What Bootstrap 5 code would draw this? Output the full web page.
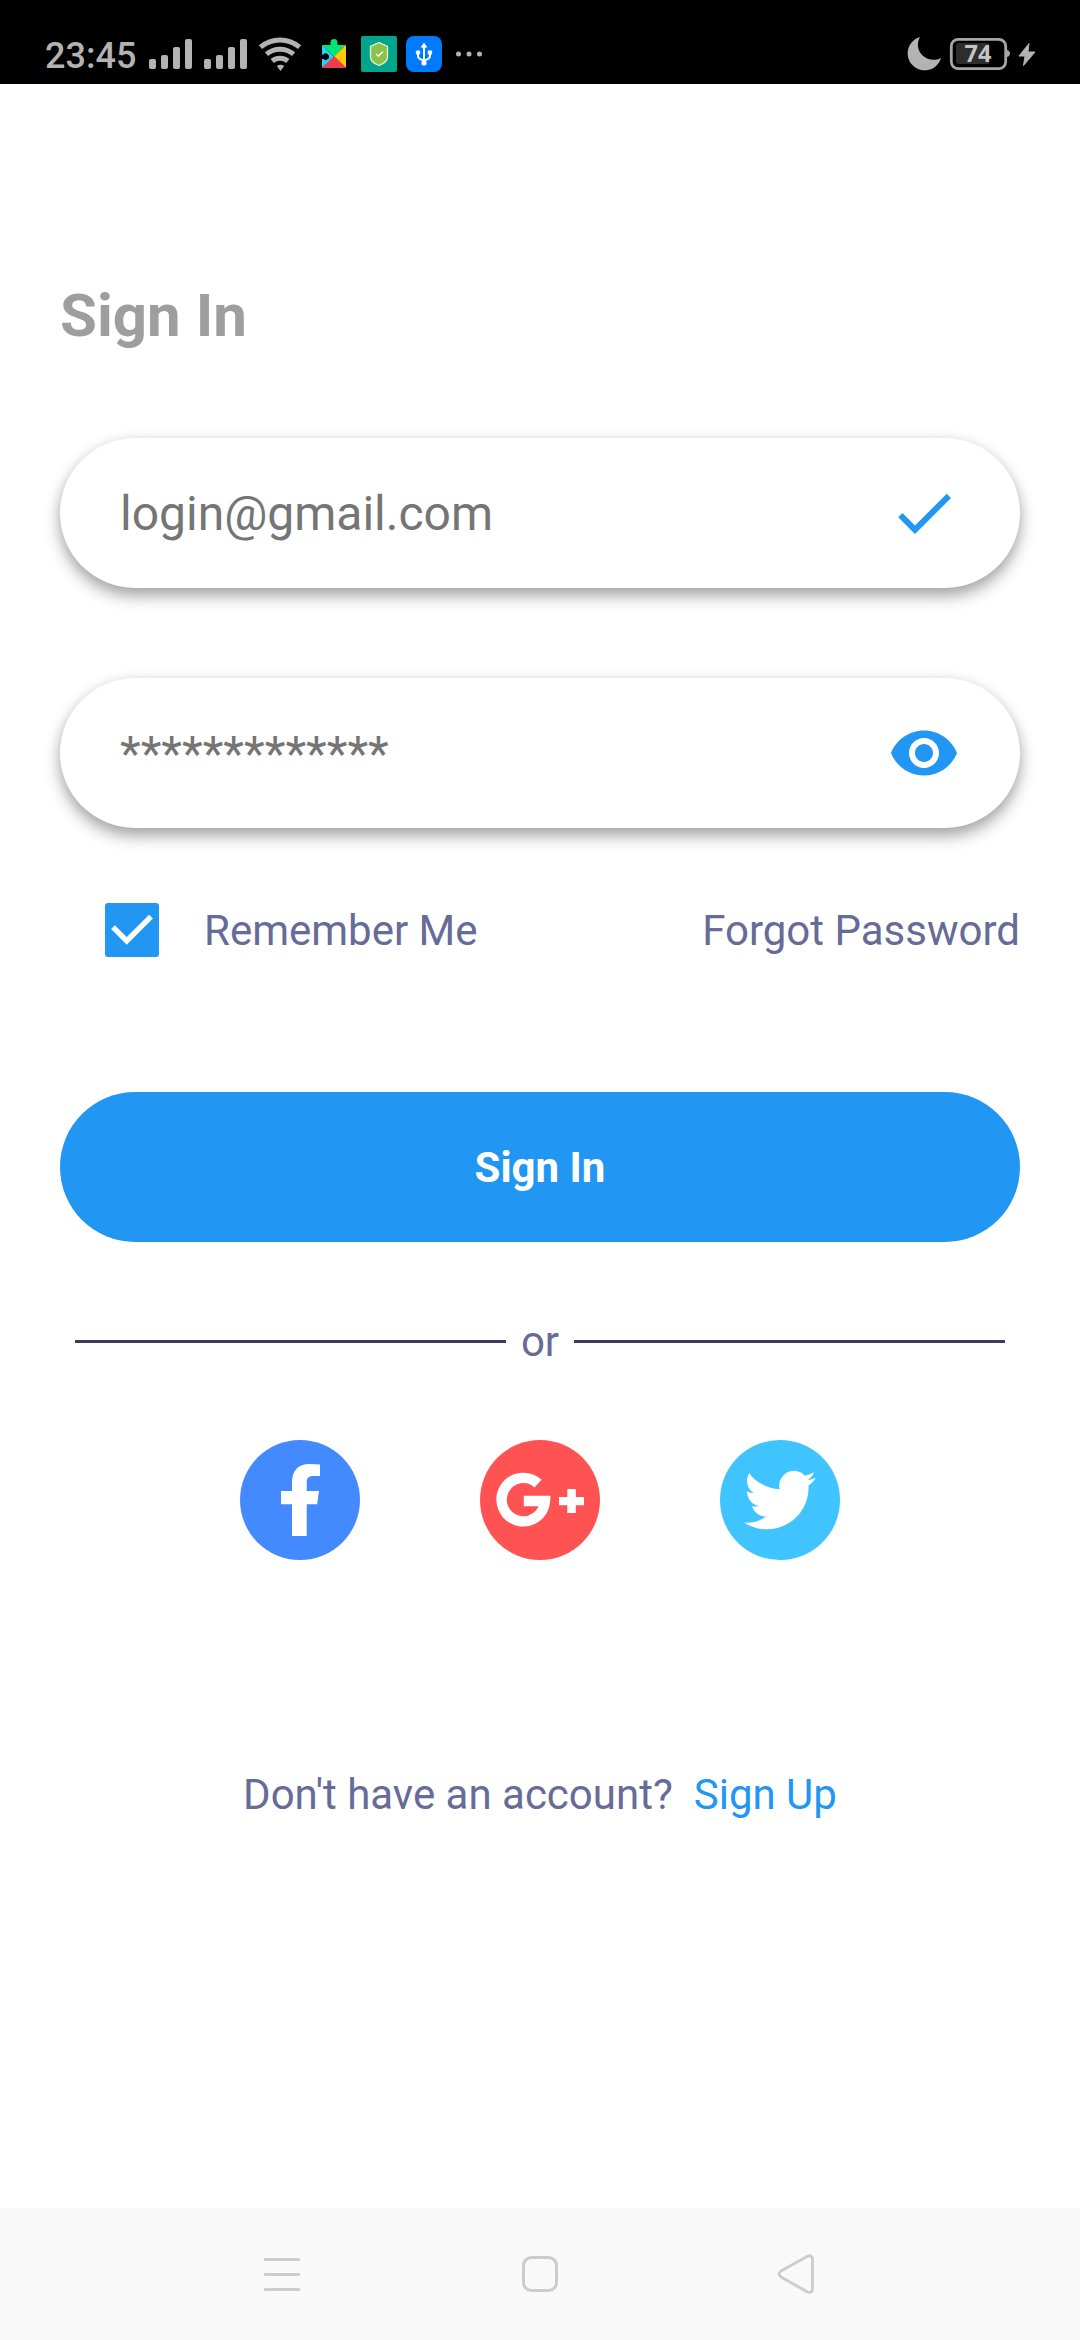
<!DOCTYPE html>
<html lang="en">
<head>
<meta charset="utf-8">
<meta name="viewport" content="width=device-width, initial-scale=1">
<title>Sign In</title>
<link rel="stylesheet" href="https://cdn.jsdelivr.net/npm/bootstrap@5.3.0/dist/css/bootstrap.min.css">
<style>
body{font-family:Roboto,sans-serif;background:#fff;color:#666b98;font-size:42px;line-height:50px}
svg{display:block;flex:none}
.screen{width:1080px;height:2340px;overflow:hidden}
.statusbar{height:84px;background:#000;color:#b3b3b3;padding:20px 42px 0 45px}
.clock{font-size:36px;line-height:72px;font-weight:500;height:64px;width:104px}
.content{padding:0 60px}
.heading{font-size:60px;line-height:70px;color:#9e9e9e;margin:197px 0 87px}
.field{height:150px;border-radius:75px;padding:0 60px;background:#fff;box-shadow:0 8px 16px rgba(0,0,0,.35),0 0 12px rgba(0,0,0,.05)}
.field + .field{margin-top:90px}
.field .form-control{font-size:48px;line-height:56px;height:58px;color:#757575;font-family:inherit;border-radius:0}
.field .form-control.pt-shift{padding-top:1px!important}
.field .form-control::placeholder{color:#757575;opacity:1}
.signin{height:150px;border-radius:75px;background:#2196f3;font-size:42px;margin-top:135px;--bs-btn-hover-bg:#2196f3}
.options{padding-left:45px;margin-top:75px;height:54px}
.options span,.options a{padding-top:2px}
.options span{margin-left:45px}
.options a,.signup a{text-decoration:none}
.options a{color:inherit}
.divider{padding:0 15px;margin-top:74px;height:50px;gap:15px}
.divider span{padding-top:2px}
.rule{height:3px;background:#3d3c60}
.social{gap:120px;margin-top:74px}
.signup{margin-top:210px;gap:21px}
.signup a{color:#2196f3}
.sysnav{height:132px;background:#f9f9f9;padding:0 263px 0 264px}
</style>
</head>
<body>
<div class="screen d-flex flex-column">
  <header class="statusbar d-flex justify-content-between">
    <div class="d-flex">
      <div class="clock">23:45</div>
      <svg width="346" height="64" viewBox="149 20 346 64" fill="#b3b3b3">
        <g id="signal"><rect x="149" y="59" width="7" height="10" rx="2"/><rect x="161" y="55" width="7" height="14" rx="2"/><rect x="173" y="47" width="7" height="22" rx="2"/><rect x="185" y="39" width="7" height="30" rx="2"/></g>
        <use href="#signal" x="55"/>
        <g fill="none" stroke="#b3b3b3" stroke-width="5"><path d="M260.4 47.2a30 30 0 0 1 39.2 0"/><path d="M266.4 54.200a21 21 0 0 1 27.2 0"/><path d="M272.2 61a12.5 12.5 0 0 1 15.6 0"/></g>
        <path d="M276.800 66q3.700-2.400 7.400 0l-3.700 5z"/>
        <path fill="#00e676" d="M322 45h8.500v-2.500a3.200 3.200 0 1 1 7 0V45H346L334 57z"/>
        <path fill="#20d5f7" d="M322 45v23l12-11z"/>
        <path fill="#ffca0a" d="M346 45v23L334 56.500z"/><path fill="#f43b4e" d="M322 68l12-12 12 12z"/>
        <path fill="#000" d="M321 54.500h2.500a3.200 3.200 0 1 1 0 4.500H321z"/>
        <rect x="361" y="36" width="36" height="36" rx="2" fill="#00a68b"/>
        <path fill="#8bc34a" stroke="#e8f5d0" stroke-width="1.300" d="M379 42.500l8.500 4v10.500q0 5.500-8.500 8.500-8.500-3-8.500-8.500V46.500z"/>
        <path fill="none" stroke="#fff" stroke-width="1.500" d="M376 54l2.500 2 4.500-4.500"/>
        <rect x="406" y="36" width="36" height="36" rx="8" fill="#007aff"/>
        <g fill="none" stroke="#fff" stroke-width="2"><path d="M424 46v18M418 53v3q0 3 6 4.500M430 53v3q0 3-6 4.500"/></g>
        <g fill="#fff"><path d="M420.500 47.500l3.500-5 3.500 5z"/><circle cx="424" cy="63" r="2.600"/><circle cx="418" cy="52.500" r="2.300"/><rect x="427.800" y="50.500" width="4.300" height="4"/></g>
        <circle cx="458.500" cy="54" r="2.500"/><circle cx="469" cy="54" r="2.500"/><circle cx="479.500" cy="54" r="2.500"/>
      </svg>
    </div>
    <svg width="132" height="64" viewBox="906 20 132 64" fill="#b3b3b3">
      <path d="M920 37a17 17 0 1 0 21 21c-13 7-29-7-21-21z"/>
      <rect x="951.300" y="39.300" width="54.400" height="29.400" rx="7" fill="none" stroke="#a6a6a6" stroke-width="2.800"/>
      <path fill="#a6a6a6" d="M1007 50q3 1 3 3.500t-3 3.500z"/>
      <path fill="#2d2d2d" d="M959 43h30v21h-30q-3 0-3-3V46q0-3 3-3z"/>
      <text x="978" y="62" text-anchor="middle" font-family="Noto Sans" font-weight="700" font-size="23.500" fill="#c4c4c4">74</text>
      <path stroke="#b3b3b3" stroke-width="1" stroke-linejoin="round" d="M1029 43.500l-10 12.500h6l-1.500 9.500L1035 52h-7z"/>
    </svg>
  </header>

  <main class="content flex-grow-1 d-flex flex-column">
    <h1 class="heading fw-bold">Sign In</h1>
    <div class="field d-flex align-items-center">
      <input class="form-control pt-shift border-0 p-0 shadow-none bg-transparent" type="text" placeholder="login@gmail.com" aria-label="Email">
      <svg width="72" height="72" viewBox="0 0 24 24" fill="#2196f3"><path d="M9 16.170L4.830 12l-1.420 1.410L9 19 21 7l-1.410-1.410z"/></svg>
    </div>
    <div class="field d-flex align-items-center">
      <input class="form-control border-0 p-0 shadow-none bg-transparent" type="text" placeholder="*************" aria-label="Password">
      <svg width="72" height="72" viewBox="0 0 24 24" fill="#2196f3"><path d="M12 4.500C7 4.500 2.730 7.610 1 12c1.730 4.390 6 7.500 11 7.500s9.270-3.110 11-7.500c-1.730-4.390-6-7.500-11-7.500zM12 17c-2.760 0-5-2.240-5-5s2.240-5 5-5 5 2.240 5 5-2.240 5-5 5zm0-8c-1.660 0-3 1.340-3 3s1.340 3 3 3 3-1.340 3-3-1.340-3-3-3z"/></svg>
    </div>
    <div class="options d-flex align-items-center">
      <svg width="54" height="54" viewBox="0 0 54 54"><rect width="54" height="54" rx="3" fill="#2196f3"/><path fill="none" stroke="#fff" stroke-width="5.400" d="M8 24.200L21.700 37.900 46 13.600"/></svg>
      <span>Remember Me</span>
      <a class="ms-auto" href="#">Forgot Password</a>
    </div>
    <button class="signin btn btn-primary border-0 w-100 fw-bold">Sign In</button>
    <div class="divider d-flex align-items-center">
      <div class="rule flex-fill"></div><span>or</span><div class="rule flex-fill"></div>
    </div>
    <div class="social d-flex justify-content-center">
      <svg width="120" height="120" viewBox="0 0 120 120"><circle cx="60" cy="60" r="60" fill="#448aff"/><path fill="#fff" d="M52 96V64.300H41V51H52V42.500C52 30 59 24 69 24q5.500 0 11 .6V36H73.500C68 36 66.700 38.500 66.700 43v8H79L77.200 64.300H66.700V96z"/></svg>
      <svg width="120" height="120" viewBox="0 0 120 120"><circle cx="60" cy="60" r="60" fill="#ff5252"/><path fill="none" stroke="#fff" stroke-width="10.400" d="M58 43.600A21.700 21.700 0 1 0 65 61H43.800"/><path fill="#fff" d="M87.300 49h8.500v8H104v8.200h-8.200V73h-8.500v-7.800H79V57h8.300z"/></svg>
      <svg width="120" height="120" viewBox="0 0 120 120"><circle cx="60" cy="60" r="60" fill="#40c4ff"/><path fill="#fff" transform="translate(24 24) scale(3)" d="M24 4.600c-.9.400-1.800.7-2.800.8 1-.6 1.800-1.600 2.200-2.700-1 .6-2 1-3.100 1.200a4.900 4.900 0 0 0-8.400 4.500C7.700 8.200 4.100 6.200 1.700 3.100.4 5.300 1 8.200 3.200 9.700c-.8 0-1.600-.2-2.200-.6v.1c0 2.300 1.600 4.400 3.900 4.800-.7.200-1.500.2-2.200.1.600 2 2.400 3.400 4.600 3.400A9.900 9.900 0 0 1 0 19.500 13.900 13.900 0 0 0 21.500 7.200c1-.7 1.800-1.600 2.500-2.600z"/></svg>
    </div>
    <div class="signup d-flex justify-content-center"><span>Don't have an account?</span><a href="#">Sign Up</a></div>
  </main>

  <nav class="sysnav d-flex justify-content-between align-items-center" aria-label="System">
    <svg width="36" height="40" viewBox="264 2254 36 40" fill="#ccc"><rect x="264" y="2258" width="36" height="3" rx="1"/><rect x="264" y="2273" width="36" height="3" rx="1"/><rect x="264" y="2288" width="36" height="3" rx="1"/></svg>
    <svg width="39" height="40" viewBox="519 2254 39 40"><rect x="523.500" y="2257.500" width="33" height="33" rx="8" fill="none" stroke="#ccc" stroke-width="3"/></svg>
    <svg width="40" height="40" viewBox="777 2254 40 40"><path fill="none" stroke="#ccc" stroke-width="2.800" d="M807.500 2256.200L781 2271q-4 3 0 6l26.500 15q4.500 1.600 5-3v-30q-.5-4.500-5-2.800z"/></svg>
  </nav>
</div>
<script src="https://cdn.jsdelivr.net/npm/bootstrap@5.3.0/dist/js/bootstrap.bundle.min.js"></script>
</body>
</html>
